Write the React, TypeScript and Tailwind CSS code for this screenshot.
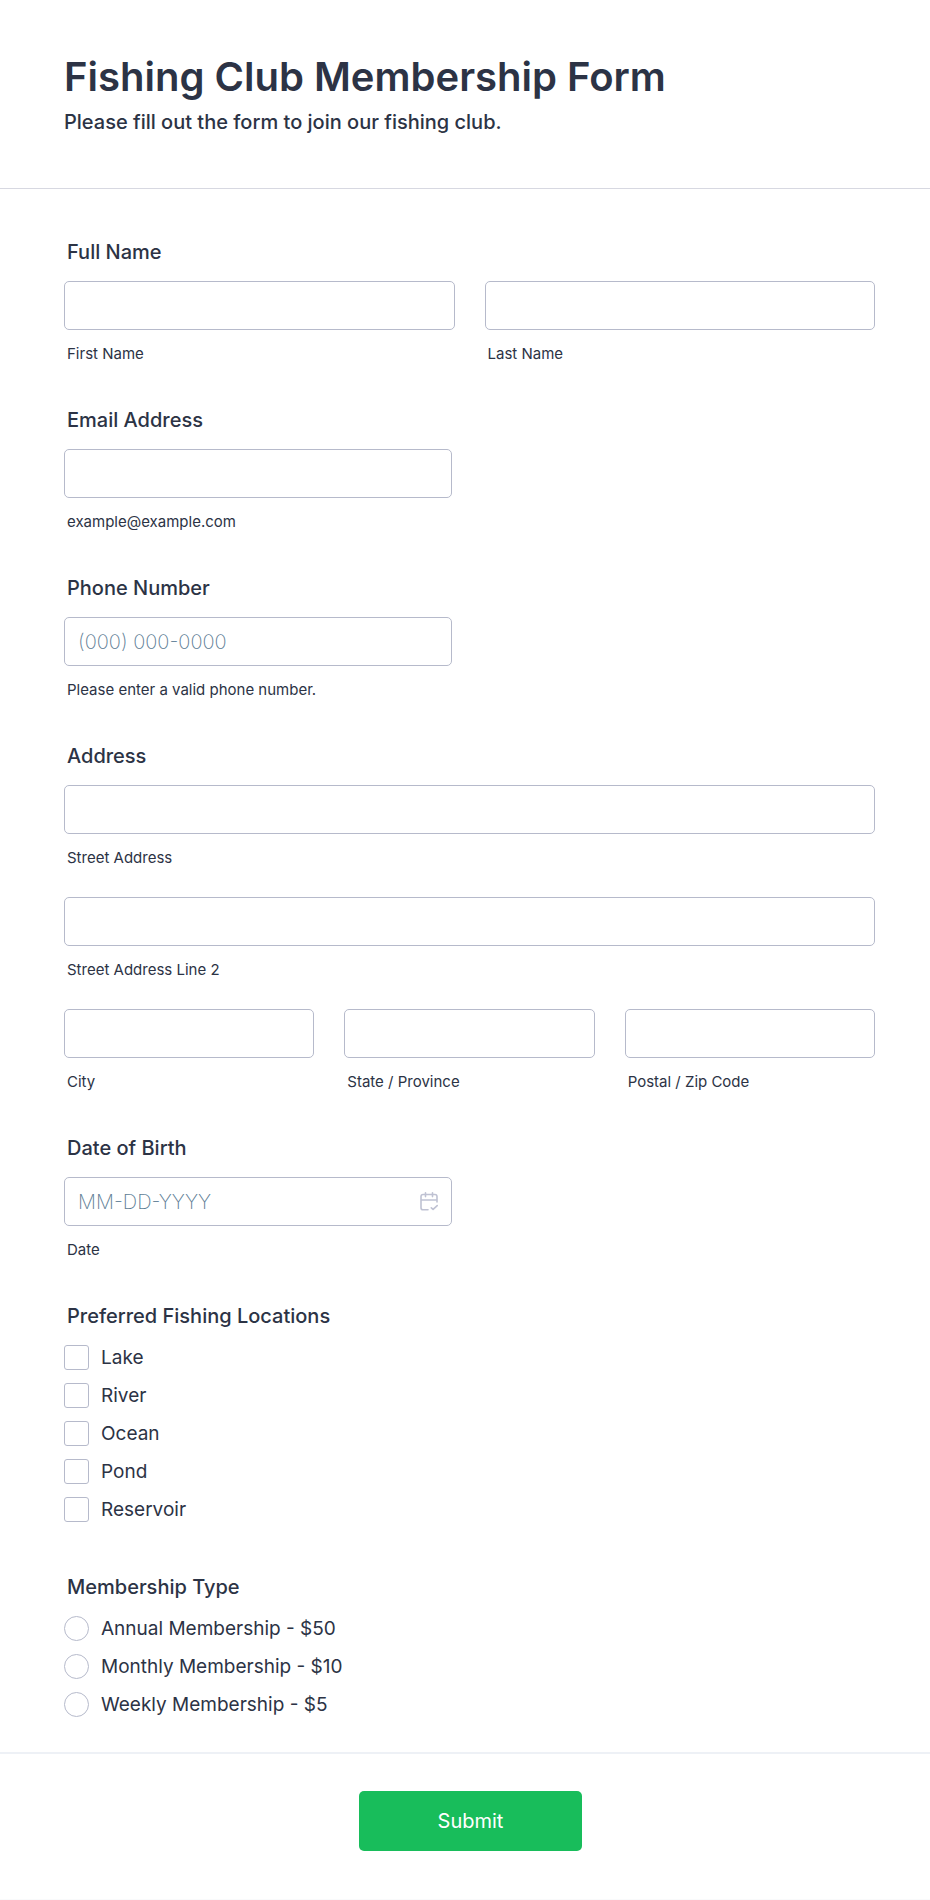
import { useState } from 'react'
import type { InputHTMLAttributes, ReactNode } from 'react'

const locations = ['Lake', 'River', 'Ocean', 'Pond', 'Reservoir']

const memberships = [
  { value: 'annual', label: 'Annual Membership - $50' },
  { value: 'monthly', label: 'Monthly Membership - $10' },
  { value: 'weekly', label: 'Weekly Membership - $5' },
]

function CalendarIcon() {
  return (
    <svg viewBox="0 0 18 19" fill="none" stroke="currentColor" className="w-[18px] h-[19px]">
      <path
        d="M8 17.800H3.100C1.900 17.800 1 16.900 1 15.700V4.600C1 3.400 1.900 2.500 3.100 2.500H14.900C16.100 2.500 17 3.400 17 4.600V10M1 8H17M5.500 0.800V4.600M12.500 0.800V4.600"
        strokeWidth="1.600"
        strokeLinecap="round"
      />
      <path d="M11.300 15.800L13.100 17.400L17.200 13.600" strokeWidth="1.600" strokeLinecap="round" strokeLinejoin="round" />
    </svg>
  )
}

type TextFieldProps = InputHTMLAttributes<HTMLInputElement> & {
  id: string
  sublabel: string
  icon?: ReactNode
}

function TextField({ id, sublabel, icon, ...props }: TextFieldProps) {
  return (
    <div className="min-w-0">
      <div className="relative">
        <input
          id={id}
          name={id}
          className="block w-full h-[49px] px-[13px] rounded-[5px] border border-[#b6bacb] bg-white text-xl placeholder:font-extralight placeholder:text-[#5c7c94] focus:outline-none focus:border-blue-500"
          {...props}
        />
        {icon && (
          <button
            type="button"
            aria-label="Choose date"
            className="absolute right-3 inset-y-0 flex items-center px-0.5 text-[#bfc2d3]"
          >
            {icon}
          </button>
        )}
      </div>
      <label htmlFor={id} className="block mt-[15px] pl-[3px] text-[15px] leading-[18px]">
        {sublabel}
      </label>
    </div>
  )
}

function Group({ title, children }: { title: string; children: ReactNode }) {
  return (
    <fieldset className="min-w-0">
      <legend className="mb-[17px] pl-[3px] text-xl leading-6 font-medium">{title}</legend>
      {children}
    </fieldset>
  )
}

export default function App() {
  const [selected, setSelected] = useState<string[]>([])
  const [membership, setMembership] = useState('')

  const toggleLocation = (name: string) => {
    setSelected((prev) => (prev.includes(name) ? prev.filter((n) => n !== name) : [...prev, name]))
  }

  return (
    <form
      onSubmit={(e) => e.preventDefault()}
      className="bg-white border-b border-gray-50 font-['Inter',sans-serif] text-[#2c3345]"
    >
      {/* Header */}
      <header className="pl-16 pr-14 pt-[53px] pb-[54px] border-b border-[#d7d8e1]">
        <h1 className="text-[40px] leading-[48px] font-semibold">Fishing Club Membership Form</h1>
        <p className="mt-[9px] text-xl leading-6 font-medium">Please fill out the form to join our fishing club.</p>
      </header>

      {/* Fields */}
      <div className="pl-16 pr-[55px] pt-[51px] pb-[35px] flex flex-col gap-[45px]">
        <Group title="Full Name">
          <div className="grid grid-cols-2 gap-[30px]">
            <TextField id="firstName" sublabel="First Name" />
            <TextField id="lastName" sublabel="Last Name" />
          </div>
        </Group>

        <Group title="Email Address">
          <div className="max-w-[388px]">
            <TextField id="email" type="email" sublabel="example@example.com" />
          </div>
        </Group>

        <Group title="Phone Number">
          <div className="max-w-[388px]">
            <TextField
              id="phone"
              type="tel"
              placeholder="(000) 000-0000"
              sublabel="Please enter a valid phone number."
            />
          </div>
        </Group>

        <Group title="Address">
          <div className="flex flex-col gap-[30px]">
            <TextField id="street" sublabel="Street Address" />
            <TextField id="street2" sublabel="Street Address Line 2" />
            <div className="grid grid-cols-3 gap-[30px]">
              <TextField id="city" sublabel="City" />
              <TextField id="state" sublabel="State / Province" />
              <TextField id="postal" sublabel="Postal / Zip Code" />
            </div>
          </div>
        </Group>

        <Group title="Date of Birth">
          <div className="max-w-[388px]">
            <TextField id="birthDate" placeholder="MM-DD-YYYY" sublabel="Date" icon={<CalendarIcon />} />
          </div>
        </Group>

        <Group title="Preferred Fishing Locations">
          <div className="flex flex-col items-start gap-[13px] pb-2">
            {locations.map((name) => (
              <label key={name} className="flex items-center gap-3 text-[19px] leading-[25px]">
                <input
                  type="checkbox"
                  checked={selected.includes(name)}
                  onChange={() => toggleLocation(name)}
                  className="appearance-none size-[25px] rounded-[3px] border border-[#b6bacb] bg-white checked:bg-blue-500"
                />
                {name}
              </label>
            ))}
          </div>
        </Group>

        <Group title="Membership Type">
          <div className="flex flex-col items-start gap-[13px]">
            {memberships.map((m) => (
              <label key={m.value} className="flex items-center gap-3 text-[19px] leading-[25px]">
                <input
                  type="radio"
                  name="membership"
                  value={m.value}
                  checked={membership === m.value}
                  onChange={() => setMembership(m.value)}
                  className="appearance-none size-[25px] rounded-full border border-[#b6bacb] bg-white checked:border-8 checked:border-blue-500"
                />
                {m.label}
              </label>
            ))}
          </div>
        </Group>
      </div>

      {/* Footer */}
      <div className="flex justify-center pl-16 pr-[53px] pt-[37px] pb-12 border-t-2 border-[#eef1f6]">
        <button type="submit" className="w-[223px] h-[60px] rounded-[5px] bg-[#18bd5b] text-xl text-white">
          Submit
        </button>
      </div>
    </form>
  )
}
